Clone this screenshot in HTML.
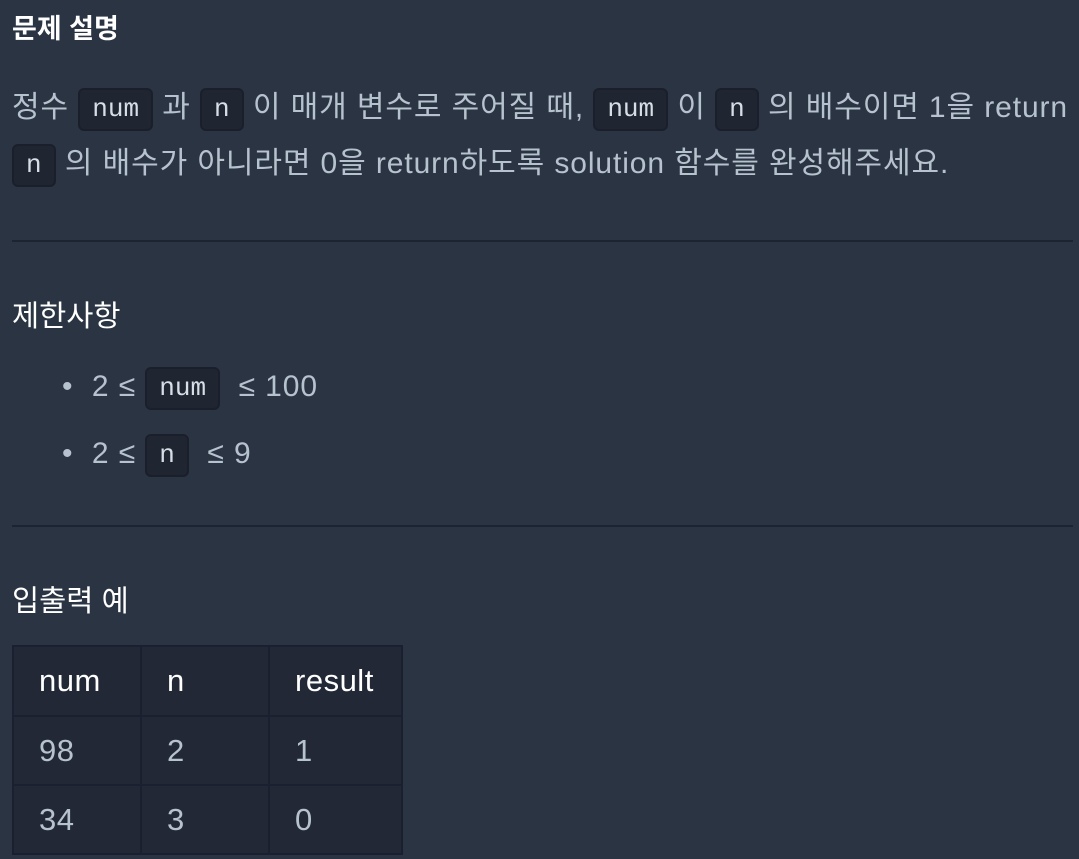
<!DOCTYPE html>
<html><head><meta charset="utf-8"><style>
body{margin:0;width:1079px;height:859px;background:#2a3443;overflow:hidden;font-family:"Liberation Sans","Noto Sans CJK KR",sans-serif;color:#b6c2cd;position:relative}
.a{position:absolute;white-space:nowrap}
.p{font-size:30px;line-height:44px;letter-spacing:0.9px}
code{font-family:"Liberation Mono","DejaVu Sans Mono",monospace;font-size:26px;letter-spacing:0;background:#202532;border:2px solid #1a1f2b;border-radius:6px;padding:4px 12px;color:#d8dee6;display:inline-block;line-height:31px;vertical-align:1px}
.hr{position:absolute;left:12px;width:1061px;height:2px;background:#1c2431}
table{position:absolute;left:12px;top:645px;border-collapse:collapse;background:#222836;font-size:31px;letter-spacing:0.5px}
td{border:2px solid #1a2030;height:69px;padding:0 0 0 25px;box-sizing:border-box}
tr:first-child td{color:#fff;height:70px}
</style></head><body>
<div class="a" style="left:12px;top:7px;font-size:27px;font-weight:bold;color:#fff">문제 설명</div>
<div class="a p" style="left:12px;top:86px">정수 <code>num</code> 과 <code>n</code> 이 매개 변수로 주어질 때, <code>num</code> 이 <code>n</code> 의 배수이면 1을 return</div>
<div class="a p" style="left:12px;top:142px"><code>n</code> 의 배수가 아니라면 0을 return하도록 solution 함수를 완성해주세요.</div>
<div class="hr" style="top:240px"></div>
<div class="a" style="left:12px;top:293px;font-size:29.5px;color:#fff">제한사항</div>
<div class="a p" style="left:62px;top:365px">•&nbsp; 2 ≤ <code>num</code> &nbsp;≤ 100</div>
<div class="a p" style="left:62px;top:432px">•&nbsp; 2 ≤ <code>n</code> &nbsp;≤ 9</div>
<div class="hr" style="top:525px"></div>
<div class="a" style="left:12px;top:578px;font-size:29.5px;color:#fff">입출력 예</div>
<table>
<tr><td style="width:128px">num</td><td style="width:128px">n</td><td style="width:133px">result</td></tr>
<tr><td>98</td><td>2</td><td>1</td></tr>
<tr><td>34</td><td>3</td><td>0</td></tr>
</table>
</body></html>
